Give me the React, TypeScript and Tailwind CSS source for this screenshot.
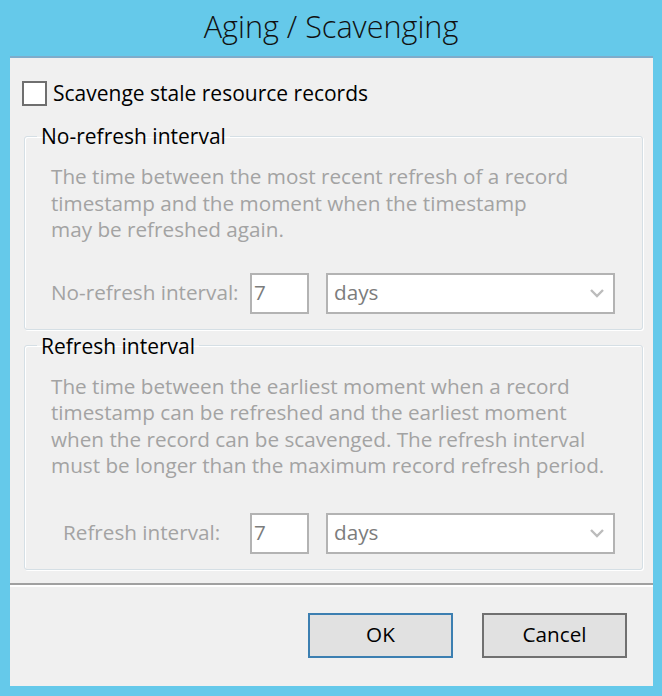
import React from 'react';

const font = { fontFamily: '"Open Sans", "Noto Sans", sans-serif' };

const Chevron: React.FC = () => (
  <svg width="16" height="10" viewBox="0 0 16 10" className="text-[#bcbcbc]">
    <polyline points="2,2 8,8 14,2" fill="none" stroke="currentColor" strokeWidth="2.4" />
  </svg>
);

interface IntervalRowProps {
  label: string;
  indent?: boolean;
}

const IntervalRow: React.FC<IntervalRowProps> = ({ label, indent }) => (
  <div className="flex items-center">
    <span className={`w-[199px] whitespace-nowrap text-[#a3a3a3] ${indent ? 'pl-[12px]' : ''}`}>{label}</span>
    <div className="flex h-[41px] w-[59px] items-center border-2 border-[#b3b3b3] bg-white pl-[2px] text-[#7c7c7c]">
      7
    </div>
    <div className="ml-[17px] flex h-[41px] w-[289px] items-center justify-between border-2 border-[#b3b3b3] bg-white pl-[6px] pr-[8px] text-[#7c7c7c]">
      <span>days</span>
      <Chevron />
    </div>
  </div>
);

interface GroupProps {
  title: string;
  lines: string[];
  label: string;
  indent?: boolean;
  rowGap: string;
  className?: string;
}

const Group: React.FC<GroupProps> = ({ title, lines, label, indent, rowGap, className }) => (
  <fieldset
    className={`ml-[14px] mr-[10px] rounded-[3px] border border-[#d5dfe5] pl-[26px] pr-[27px] pb-[15px] shadow-[inset_1px_1px_0_#ffffff,1px_1px_0_#ffffff] ${className ?? ''}`}
  >
    <legend className="-ml-[14px] px-[4px] text-[21px] leading-[26px] text-black">{title}</legend>
    <div className="mt-[14px] whitespace-nowrap leading-[26.5px] text-[#a3a3a3]">
      {lines.map((l) => (
        <div key={l}>{l}</div>
      ))}
    </div>
    <div className={rowGap}>
      <IntervalRow label={label} indent={indent} />
    </div>
  </fieldset>
);

export default function App() {
  return (
    <div className="flex h-[696px] w-[662px] flex-col bg-[#65c9ea] text-[20.7px]" style={font}>
      <div className="flex h-[56px] items-center justify-center pb-[2px] text-[30.6px] font-light text-[#111]">
        Aging / Scavenging
      </div>
      <div className="mb-[10px] ml-[10px] mr-[9px] flex flex-1 flex-col border-t-2 border-[#7eaccb] bg-[#f0f0f0]">
        <label className="ml-[12px] mt-[22px] flex items-center">
          <span className="h-[25px] w-[25px] border-2 border-[#6f6f6f] bg-white" />
          <span className="ml-[6px] text-[21px] leading-[26px] text-black">Scavenge stale resource records</span>
        </label>

        <Group
          className="mt-[17px]"
          title="No-refresh interval"
          lines={[
            'The time between the most recent refresh of a record',
            'timestamp and the moment when the timestamp',
            'may be refreshed again.',
          ]}
          label="No-refresh interval:"
          rowGap="mt-[30px]"
        />

        <Group
          className="mt-[3px]"
          title="Refresh interval"
          lines={[
            'The time between the earliest moment when a record',
            'timestamp can be refreshed and the earliest moment',
            'when the record can be scavenged. The refresh interval',
            'must be longer than the maximum record refresh period.',
          ]}
          label="Refresh interval:"
          indent
          rowGap="mt-[34px]"
        />

        <div className="mt-[13px] h-[2px] bg-[#a0a0a0]" />
        <div className="h-[2px] bg-white" />

        <div className="mr-[26px] mt-[26px] flex justify-end gap-[29px]">
          <button className="h-[45px] w-[145px] border-2 border-[#3c7fb1] bg-[#e1e1e1] text-black">OK</button>
          <button className="h-[45px] w-[145px] border-2 border-[#707070] bg-[#e1e1e1] text-black">Cancel</button>
        </div>
      </div>
    </div>
  );
}
